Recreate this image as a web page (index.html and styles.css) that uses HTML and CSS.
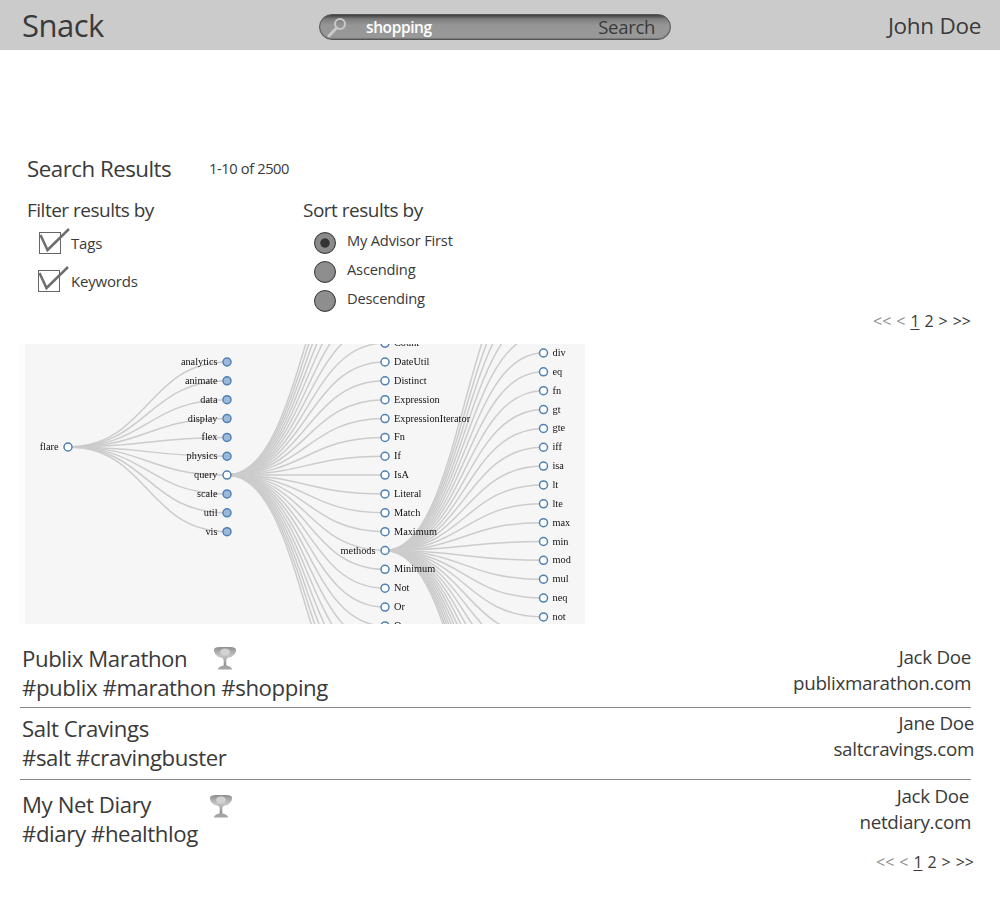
FILE: index.html
```html
<!DOCTYPE html>
<html lang="en">
<head>
    <meta charset="UTF-8">
    <title>Snack - Search Results</title>
    <link rel="stylesheet" href="styles.css">
</head>
<body>
    <svg class="defs" width="0" height="0">
        <defs>
            <linearGradient id="cupFill" x1="0" y1="0" x2="0" y2="1">
                <stop offset="0" stop-color="#8e8e8e"/>
                <stop offset="0.45" stop-color="#c4c4c4"/>
                <stop offset="1" stop-color="#8c8c8c"/>
            </linearGradient>
            <symbol id="trophy" viewBox="0 0 24 24">
                <path d="M1 4C1 1.500 3 1 12 1S23 1.500 23 4C23 8 20 11 15.500 11.500C14 12 13.500 13 13.300 14.500L13.300 20L10.700 20L10.700 14.500C10.500 13 10 12 8.500 11.500C4 11 1 8 1 4Z" fill="url(#cupFill)"/>
                <ellipse cx="12" cy="6" rx="5" ry="3.500" fill="#d2d2d2"/>
                <path d="M5 23.500C5 21.500 8 19.500 12 19.500S19 21.500 19 23.500Z" fill="#a4a4a4"/>
            </symbol>
        </defs>
    </svg>

    <header class="topbar">
        <div class="logo">Snack</div>
        <div class="searchbox">
            <svg class="searchicon" width="22" height="22" viewBox="0 0 22 22">
                <circle cx="14" cy="8" r="5" fill="none" stroke="#c9c9c9" stroke-width="2"/>
                <path d="M10.500 12L3 20" stroke="#c9c9c9" stroke-width="3" stroke-linecap="round"/>
            </svg>
            <span class="query">shopping</span>
            <span class="searchbtn">Search</span>
        </div>
        <div class="username">John Doe</div>
    </header>

    <main class="content">
        <div class="results-head">
            <h1>Search Results</h1>
            <span class="count">1-10 of 2500</span>
        </div>

        <div class="options">
            <div class="filter">
                <h2>Filter results by</h2>
                <div class="check-row">
                    <svg class="check" width="32" height="26" viewBox="0 0 32 26">
                        <rect x="1.500" y="4.500" width="21" height="21" fill="none" stroke="#666"/>
                        <path d="M2.500 7L9.500 22L31 1" fill="none" stroke="#6e6e6e" stroke-width="2.500"/>
                    </svg>
                    <span>Tags</span>
                </div>
                <div class="check-row">
                    <svg class="check" width="32" height="26" viewBox="0 0 32 26">
                        <rect x="1.500" y="4.500" width="21" height="21" fill="none" stroke="#666"/>
                        <path d="M2.500 7L9.500 22L31 1" fill="none" stroke="#6e6e6e" stroke-width="2.500"/>
                    </svg>
                    <span>Keywords</span>
                </div>
            </div>
            <div class="sort">
                <h2>Sort results by</h2>
                <div class="radio-row"><span class="radio selected"></span><span class="radio-label">My Advisor First</span></div>
                <div class="radio-row"><span class="radio"></span><span class="radio-label">Ascending</span></div>
                <div class="radio-row"><span class="radio"></span><span class="radio-label">Descending</span></div>
            </div>
        </div>

        <div class="pager top-pager">
            <span class="off">&lt;&lt; &lt;</span> <u>1</u> 2 &gt; &gt;&gt;
        </div>

        <svg id="tree" class="tree" width="567" height="280" viewBox="18 344 567 280"></svg>

        <div class="results">
            <div class="result first">
                <div class="result-left">
                    <div class="title">Publix Marathon <svg class="cup cup-a" width="24" height="24"><use href="#trophy"/></svg></div>
                    <div class="tags">#publix #marathon #shopping</div>
                </div>
                <div class="result-right">
                    <div>Jack Doe</div>
                    <div>publixmarathon.com</div>
                </div>
            </div>
            <div class="result second">
                <div class="result-left">
                    <div class="title">Salt Cravings</div>
                    <div class="tags">#salt #cravingbuster</div>
                </div>
                <div class="result-right">
                    <div>Jane Doe</div>
                    <div>saltcravings.com</div>
                </div>
            </div>
            <div class="result third">
                <div class="result-left">
                    <div class="title">My Net Diary <svg class="cup cup-b" width="24" height="24"><use href="#trophy"/></svg></div>
                    <div class="tags">#diary #healthlog</div>
                </div>
                <div class="result-right">
                    <div class="name-in">Jack Doe</div>
                    <div>netdiary.com</div>
                </div>
            </div>
        </div>

        <div class="pager bottom-pager">
            <span class="off">&lt;&lt; &lt;</span> <u>1</u> 2 &gt; &gt;&gt;
        </div>
    </main>

    <script src="tree.js"></script>
</body>
</html>
```

FILE: styles.css
```css
* {
    box-sizing: border-box;
}
body {
    margin: 0;
    background: #fff;
    color: #3a3a3a;
    font-family: "Open Sans", "Noto Sans", sans-serif;
}
.defs {
    display: block;
    height: 0;
}
h1, h2 {
    margin: 0;
    font-weight: 400;
}

.topbar {
    height: 50px;
    background: #cbcbcb;
    display: grid;
    grid-template-columns: 319px 352px 1fr;
    align-items: center;
}
.logo {
    padding-left: 22px;
    font-size: 31px;
    letter-spacing: -0.5px;
}
.searchbox {
    height: 26px;
    margin-top: 3px;
    border: 1px solid #555;
    border-radius: 13px;
    background: linear-gradient(#3f3f3f 0, #7c7c7c 4px, #969696 10px, #999 100%);
    display: flex;
    align-items: center;
    padding: 0 15px 0 6px;
    box-shadow: inset 0 -1px 1px #777;
}
.searchicon {
    margin-right: 18px;
}
.query {
    color: #fff;
    font-size: 15.500px;
    font-weight: 600;
    letter-spacing: -0.4px;
}
.searchbtn {
    margin-left: auto;
    font-size: 18.500px;
    letter-spacing: -0.3px;
}
.username {
    text-align: right;
    padding-right: 19px;
    font-size: 22.500px;
    letter-spacing: -0.3px;
}

.content {
    padding: 103px 0 0 0;
}
.results-head {
    display: flex;
    align-items: center;
    padding: 0 0 2px 27px;
    height: 32px;
}
.results-head h1 {
    width: 182px;
    font-size: 22.300px;
    letter-spacing: -0.5px;
}
.count {
    font-size: 14.700px;
    letter-spacing: -0.4px;
}

.options {
    display: flex;
    padding: 13px 0 0 27px;
}
.filter {
    width: 276px;
}
.options h2 {
    font-size: 19px;
    letter-spacing: -0.5px;
    line-height: 24px;
}
.check-row {
    display: flex;
    align-items: flex-end;
    height: 38px;
    margin-left: 11px;
    font-size: 15px;
    letter-spacing: -0.2px;
}
.check-row:first-of-type {
    height: 32px;
}
.check-row:last-child .check {
    margin: 0 1px 0 -1px;
}
.check-row span {
    margin-left: 1px;
    padding-bottom: 1px;
}
.radio-row {
    display: flex;
    align-items: center;
    height: 29px;
    margin-left: 11px;
    font-size: 14.700px;
    letter-spacing: -0.2px;
}
.radio-row:first-of-type {
    margin-top: 6px;
}
.radio-label {
    padding-bottom: 5px;
}
.radio {
    width: 22px;
    height: 22px;
    margin-right: 11px;
    border: 1px solid #333;
    border-radius: 50%;
    background: radial-gradient(circle at 45% 45%, #8e8e8e 60%, #5f5f5f 100%);
}
.radio.selected {
    background: radial-gradient(circle, #333 0, #333 30%, #8a8a8a 36%, #8a8a8a 62%, #5a5a5a 100%);
}

.pager {
    font-size: 16px;
    line-height: 20px;
    text-align: right;
    word-spacing: 0.800px;
}
.pager .off {
    color: #8f8f8f;
}
.pager u {
    text-underline-offset: 2px;
}
.top-pager {
    margin-top: -4px;
    padding-right: 29px;
    height: 33px;
}
.bottom-pager {
    margin-top: -2px;
    padding-right: 26px;
}

.tree {
    display: block;
    margin-left: 18px;
    background: linear-gradient(90deg, #fcfcfc 0, #fcfcfc 7px, #f6f6f6 7px);
    filter: blur(0.3px);
}
.tree .link {
    fill: none;
    stroke: #ccc;
    stroke-width: 1.500px;
}
.tree .node {
    fill: #fff;
    stroke: #4f82b4;
    stroke-width: 1.500px;
}
.tree .node.closed {
    fill: #9db9d9;
}
.tree text {
    font-family: "Liberation Serif", serif;
    font-size: 10.300px;
    fill: #111;
}

.results {
    padding: 0 29px 0 20px;
}
.result {
    display: flex;
    justify-content: space-between;
    padding-left: 2px;
    border-bottom: 1px solid #8a8a8a;
}
.result.first {
    height: 84px;
    padding-top: 20px;
}
.result.second {
    height: 72px;
    padding-top: 6px;
}
.result.third {
    height: 74px;
    padding-top: 10px;
    border-bottom: none;
}
.title, .tags {
    font-size: 22.200px;
    line-height: 29px;
    letter-spacing: -0.4px;
    white-space: nowrap;
}
.cup {
    filter: blur(0.5px);
}
.cup-a {
    margin-left: 20px;
    vertical-align: -3px;
}
.cup-b {
    margin-left: 53px;
    vertical-align: -5px;
}
.result-right {
    text-align: right;
    font-size: 18.800px;
    line-height: 26px;
    letter-spacing: -0.3px;
}
.second .result-right {
    margin: -4px -3px 0 0;
}
.third .result-right {
    margin-top: -7px;
}
.name-in {
    padding-right: 2px;
}
```

FILE: tree.js
```js
// collapsible-tree look: a root, its packages, the query package, its methods
var svg = document.getElementById("tree");
var NS = "http://www.w3.org/2000/svg";
var STEP = 18.85;

var packages = ["analytics", "animate", "data", "display", "flex", "physics", "query", "scale", "util", "vis"];
var classes = ["AggregateExpression", "And", "Arithmetic", "Average", "BinaryExpression", "Comparison",
    "CompositeExpression", "Count", "DateUtil", "Distinct", "Expression", "ExpressionIterator", "Fn", "If",
    "IsA", "Literal", "Match", "Maximum", "methods", "Minimum", "Not", "Or", "Query", "Range", "StringUtil",
    "Sum", "Variable", "Variance", "Xor"];
var methods = ["add", "and", "average", "count", "distinct", "div", "eq", "fn", "gt", "gte", "iff", "isa", "lt",
    "lte", "max", "min", "mod", "mul", "neq", "not", "or", "orderby", "range", "select", "stddev", "sub", "sum",
    "update", "variance", "where", "xor", "_"];

function el(name, attrs, text) {
    var e = document.createElementNS(NS, name);
    for (var k in attrs) {
        e.setAttribute(k, attrs[k]);
    }
    if (text) {
        e.textContent = text;
    }
    svg.appendChild(e);
}

function link(x0, y0, x1, y1) {
    var m = (x0 + x1) / 2;
    el("path", { "class": "link", d: "M" + x0 + " " + y0 + "C" + m + " " + y0 + " " + m + " " + y1 + " " + x1 + " " + y1 });
}

function node(x, y, label, closed, left) {
    // the picture is a crop of a bigger tree, nodes past its edges are not drawn
    if (y < 336 || y > 632) {
        return;
    }
    el("circle", { "class": closed ? "node closed" : "node", cx: x, cy: y, r: 4 });
    el("text", {
        x: left ? x - 9.5 : x + 9,
        y: y + 3,
        "text-anchor": left ? "end" : "start"
    }, label);
}

var rootY = 447, pkgX = 227, clsX = 385, mthX = 543.5;
var queryY = 475, methodsY = 550.5, divY = 353;

// links go down first so the nodes sit on top of them
packages.forEach(function (name, i) {
    link(68, rootY, pkgX, 362 + i * STEP);
});
classes.forEach(function (name, i) {
    link(pkgX, queryY, clsX, methodsY + (i - 18) * STEP);
});
methods.forEach(function (name, i) {
    link(clsX, methodsY, mthX, divY + (i - 5) * STEP);
});

node(68, rootY, "flare", false, true);
packages.forEach(function (name, i) {
    node(pkgX, 362 + i * STEP, name, name !== "query", true);
});
classes.forEach(function (name, i) {
    node(clsX, methodsY + (i - 18) * STEP, name, false, name === "methods");
});
methods.forEach(function (name, i) {
    node(mthX, divY + (i - 5) * STEP, name, false, false);
});
```
